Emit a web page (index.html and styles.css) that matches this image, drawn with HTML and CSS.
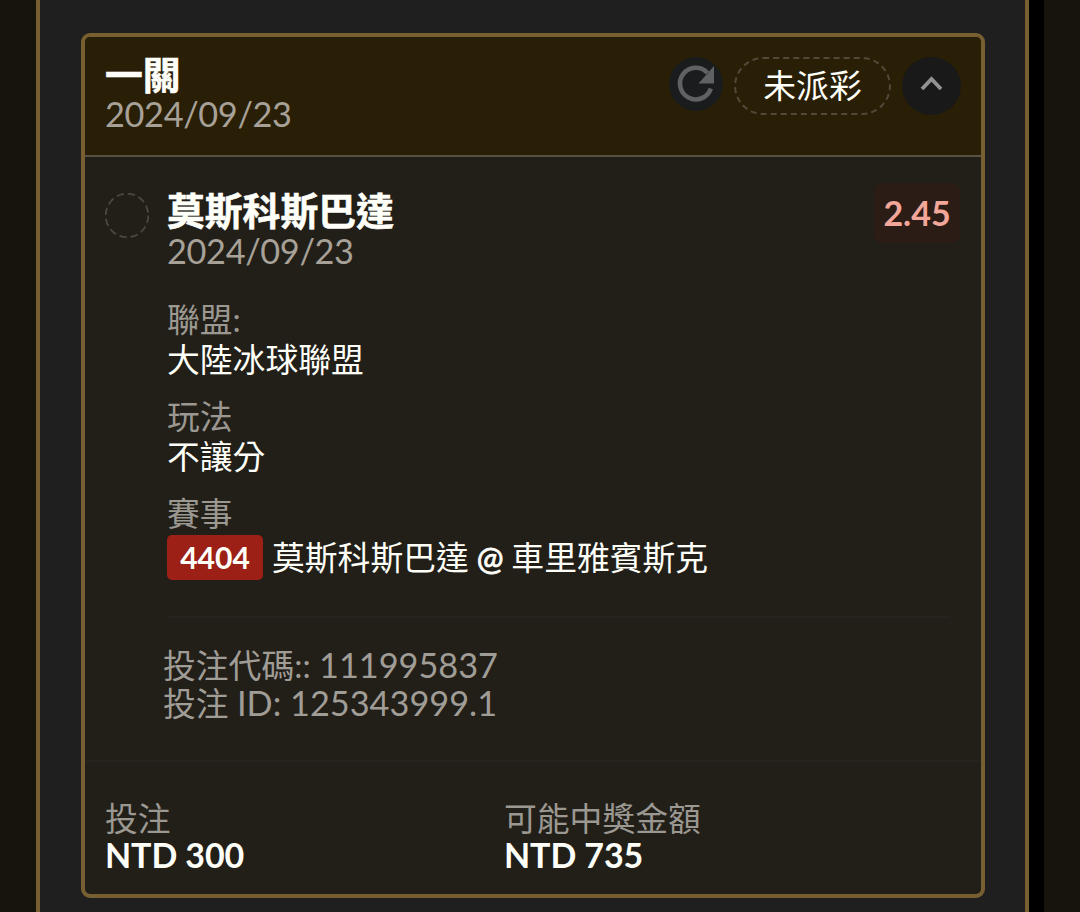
FILE: index.html
```html
<!DOCTYPE html>
<html lang="zh-Hant">
<head>
    <meta charset="UTF-8">
    <meta name="viewport" content="width=device-width, initial-scale=1.0">
    <title>一關</title>
    <link rel="stylesheet" href="styles.css">
</head>
<body>
    <div class="panel">
        <div class="ticket">
            <div class="ticket-header">
                <div class="header-text">
                    <div class="title">一關</div>
                    <div class="date">2024/09/23</div>
                </div>
                <div class="refresh">
                    <svg width="54" height="54" viewBox="0 0 54 54">
                        <path d="M41.8 31.5A15.8 15.8 0 1 1 38.5 16" fill="none" stroke="#606162" stroke-width="4.6"/>
                        <path d="M45 9V26.5H29.5Z" fill="#606162"/>
                    </svg>
                </div>
                <div class="status">未派彩</div>
                <div class="toggle">
                    <svg width="58" height="58" viewBox="0 0 58 58">
                        <path d="M20 32L29.5 22L39 32" fill="none" stroke="#929292" stroke-width="3.8"/>
                    </svg>
                </div>
            </div>

            <div class="bet">
                <svg class="bet-mark" width="44" height="46" viewBox="0 0 44 46">
                    <ellipse cx="22" cy="22.5" rx="21.3" ry="21.8" fill="none" stroke="#4b4842" stroke-width="1.8" stroke-dasharray="7.3 4"/>
                </svg>
                <div class="bet-info">
                    <div class="bet-top">
                        <div>
                            <div class="title">莫斯科斯巴達</div>
                            <div class="date">2024/09/23</div>
                        </div>
                        <div class="odds">2.45</div>
                    </div>
                    <div class="field">
                        <div class="label">聯盟:</div>
                        <div class="value">大陸冰球聯盟</div>
                    </div>
                    <div class="field">
                        <div class="label">玩法</div>
                        <div class="value">不讓分</div>
                    </div>
                    <div class="field">
                        <div class="label">賽事</div>
                        <div class="match">
                            <span class="code">4404</span>
                            <span class="teams">莫斯科斯巴達 <span class="at">@</span> 車里雅賓斯克</span>
                        </div>
                    </div>
                    <div class="refs">
                        <div>投注代碼:: <span class="num">111995837</span></div>
                        <div>投注 <span class="num">ID: 125343999.1</span></div>
                    </div>
                </div>
            </div>

            <div class="ticket-footer">
                <div class="amount">
                    <div class="label">投注</div>
                    <div class="money">NTD 300</div>
                </div>
                <div class="amount">
                    <div class="label">可能中獎金額</div>
                    <div class="money">NTD 735</div>
                </div>
            </div>
        </div>
    </div>
    <div class="gutter"></div>
</body>
</html>
```
FILE: styles.css
```css
* {
    box-sizing: border-box;
}

body {
    margin: 0;
    height: 912px;
    padding: 0 36px;
    display: flex;
    overflow: hidden;
    background-color: #17140e;
    font-family: Lato, "Noto Sans CJK TC", sans-serif;
    font-size: 32.8px;
    color: #fffffa;
}

svg {
    display: block;
}

.panel {
    width: 993px;
    flex-shrink: 0;
    padding: 33px 40px 0 41px;
    background-color: #1f1f1f;
    border-left: 4px solid #785f31;
    border-right: 4px solid #785f31;
}

.gutter {
    width: 15px;
    flex-shrink: 0;
    background-color: #000;
}

.ticket {
    height: 865px;
    background-color: #221f19;
    border: 4px solid #785f31;
    border-radius: 9px;
    overflow: hidden;
}

.ticket-header {
    display: flex;
    align-items: flex-start;
    height: 120px;
    padding: 20px 20px 0;
    background-color: #291e06;
    border-bottom: 2px solid #565143;
}

.header-text {
    flex: 1;
}

.title {
    font-size: 37.8px;
    font-weight: bold;
    line-height: 36px;
    padding-bottom: 1px;
    -webkit-text-stroke: 0.6px #fffffa;
}

.date {
    font-size: 34.3px;
    letter-spacing: -0.35px;
    line-height: 39px;
    color: #a7a198;
}

.refresh, .toggle {
    border-radius: 50%;
}

.refresh {
    width: 54px;
    height: 54px;
    margin-right: 11px;
    background-color: #1a1c1e;
}

.status {
    width: 157px;
    height: 58px;
    margin-right: 11px;
    border: 2px dashed #514a3b;
    border-radius: 29px;
    text-align: center;
    line-height: 53px;
}

.toggle {
    width: 59px;
    height: 58px;
    background-color: #191919;
}

.bet {
    display: flex;
    gap: 18px;
    height: 603px;
    padding: 36px 20px 0;
}

.bet-info {
    flex: 1;
}

.bet-top {
    display: flex;
    justify-content: space-between;
    height: 107px;
}

.bet-top .date {
    line-height: 41px;
}

.odds {
    width: 86px;
    height: 60px;
    margin: -10px 1px 0 0;
    border-radius: 8px;
    background-color: #2b1c16;
    color: #f3a79a;
    font-size: 34px;
    font-weight: bold;
    line-height: 60px;
    text-align: center;
}

.label {
    line-height: 40px;
    color: #9b9892;
}

.value {
    line-height: 40px;
}

.field {
    margin-bottom: 17px;
}

.match {
    display: flex;
    align-items: center;
    gap: 9px;
    height: 47px;
}

.code {
    width: 96px;
    height: 45px;
    border-radius: 5px;
    background-color: #9d2017;
    font-size: 30px;
    font-weight: bold;
    line-height: 44px;
    text-align: center;
}

.teams {
    line-height: 40px;
    word-spacing: -0.5px;
}

.at {
    font-size: 32px;
    -webkit-text-stroke: 0.8px #fffffa;
}

.refs {
    margin: 35px 11px 0 0;
    padding-top: 28px;
    border-top: 2px solid #25231e;
    color: #a09d97;
    line-height: 37px;
}

.refs div {
    height: 38px;
    margin-left: -4px;
}

.num {
    font-size: 34.3px;
}

.ticket-footer {
    display: flex;
    padding: 38px 20px 0;
    border-top: 2px solid #25231e;
}

.amount {
    width: 399px;
}

.amount .label {
    line-height: 38px;
}

.money {
    font-size: 34px;
    letter-spacing: -0.1px;
    font-weight: bold;
    line-height: 34px;
}
```
